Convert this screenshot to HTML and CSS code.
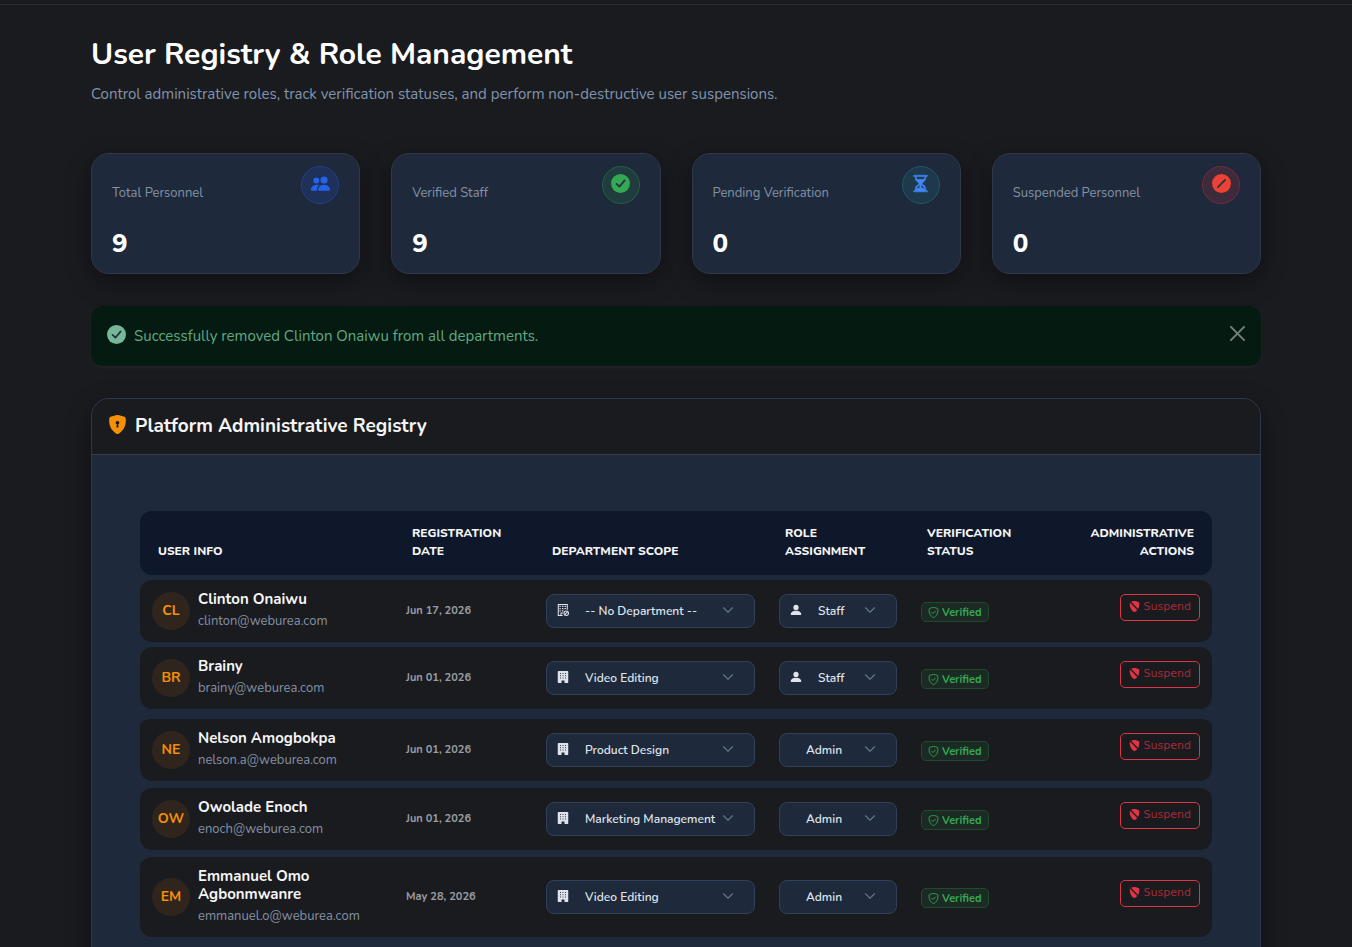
FILE: index.html
```html
<!DOCTYPE html>
<html lang="en">
<head>
  <meta charset="UTF-8">
  <title>User Registry &amp; Role Management</title>
  <meta name="viewport" content="width=device-width,initial-scale=1">
  <link rel="stylesheet" href="styles.css">
</head>
<body>

<!-- ICONS -->
<svg class="sprite" aria-hidden="true">
  <symbol id="people" viewBox="0 0 16 16"><path d="M7 14s-1 0-1-1 1-4 5-4 5 3 5 4-1 1-1 1zm4-6a3 3 0 1 0 0-6 3 3 0 0 0 0 6m-5.784 6A2.24 2.24 0 0 1 5 13c0-1.355.68-2.75 1.936-3.72A6.3 6.3 0 0 0 5 9c-4 0-5 3-5 4s1 1 1 1zM4.500 8a2.500 2.500 0 1 0 0-5 2.500 2.500 0 0 0 0 5"/></symbol>
  <symbol id="check-circle" viewBox="0 0 16 16"><path d="M16 8A8 8 0 1 1 0 8a8 8 0 0 1 16 0"/><path class="cut" d="M4.700 8.300 7.100 10.700 11.500 5.400"/></symbol>
  <symbol id="hourglass" viewBox="0 0 16 16"><path stroke="currentColor" stroke-width=".5" d="M2.500 15a.5.5 0 1 1 0-1h1v-1a4.500 4.500 0 0 1 2.557-4.060c.29-.139.443-.377.443-.59v-.7c0-.213-.154-.451-.443-.59A4.500 4.500 0 0 1 3.500 3V2h-1a.5.5 0 0 1 0-1h11a.5.5 0 0 1 0 1h-1v1a4.500 4.500 0 0 1-2.557 4.060c-.29.139-.443.377-.443.59v.7c0 .213.154.451.443.59A4.500 4.500 0 0 1 12.500 13v1h1a.5.5 0 0 1 0 1zm2-13v1c0 .537.12 1.045.337 1.500h6.326c.216-.455.337-.963.337-1.500V2zm3 6.350c0 .701-.478 1.236-1.011 1.492A3.500 3.500 0 0 0 4.500 13s.866-1.299 3-1.480zm1 0v3.170c2.134.181 3 1.480 3 1.480a3.500 3.500 0 0 0-1.989-3.158C8.978 9.586 8.500 9.052 8.500 8.351z"/></symbol>
  <symbol id="slash-circle" viewBox="0 0 16 16"><circle cx="8" cy="8" r="8"/><path class="cut" d="M5 11 11 5"/></symbol>
  <symbol id="shield-lock" viewBox="0 0 16 16"><path fill-rule="evenodd" d="M8 0c-.69 0-1.843.265-2.928.56-1.110.3-2.229.655-2.887.87a1.540 1.540 0 0 0-1.044 1.262c-.596 4.477.787 7.795 2.465 9.990a11.800 11.800 0 0 0 2.517 2.453c.386.273.744.482 1.048.625.28.132.581.24.829.24s.548-.108.829-.24a7 7 0 0 0 1.048-.625 11.800 11.800 0 0 0 2.517-2.453c1.678-2.195 3.061-5.513 2.465-9.990a1.540 1.540 0 0 0-1.044-1.263 63 63 0 0 0-2.887-.87C9.843.266 8.690 0 8 0m0 5a1.500 1.500 0 0 1 .5 2.915l.385 1.990a.5.5 0 0 1-.491.595h-.788a.5.5 0 0 1-.490-.595l.384-1.990A1.500 1.500 0 0 1 8 5"/></symbol>
  <symbol id="shield-slash" viewBox="0 0 16 16"><path d="M2.200 1.400C4 .800 6.500 0 8 0s4 .800 5.800 1.400c.6.200 1 .700 1.100 1.300.5 3.700-.4 6.700-1.700 8.900L2.900 1.200z"/><path d="M1.200 2.300c-.6 4.600.800 8 2.400 10.300C5 14.500 7 16 8 16c.9 0 2.700-1.200 4.100-2.900z"/></symbol>
  <symbol id="shield-check" viewBox="0 0 16 16"><path d="M8 .7C6.500.7 4 1.500 2.200 2.100c-.3.100-.5.300-.5.600C1 7.500 2.700 10.800 4.300 12.700 5.700 14.300 7.300 15.400 8 15.400s2.300-1.100 3.700-2.700c1.600-1.900 3.300-5.200 2.600-10 0-.3-.2-.5-.5-.6C12 1.500 9.500.7 8 .7z" fill="none" stroke="currentColor" stroke-width="1.300"/><path d="M5.300 7.500 7.300 9.500 10.800 5.800" fill="none" stroke="currentColor" stroke-width="1.300" stroke-linecap="round"/></symbol>
  <symbol id="building" viewBox="0 0 16 16"><path fill-rule="evenodd" d="M2 0a1 1 0 0 0-1 1v14a1 1 0 0 0 1 1h4v-3a.5.5 0 0 1 .5-.5h3a.5.5 0 0 1 .5.5v3h4a1 1 0 0 0 1-1V1a1 1 0 0 0-1-1zm2 2.500h1.200V4H4zm3.400 0h1.200V4H7.400zm3.400 0H12V4h-1.200zM4 5.500h1.200V7H4zm3.400 0h1.200V7H7.400zm3.400 0H12V7h-1.200zM4 8.500h1.200V10H4zm3.400 0h1.200V10H7.400zm3.400 0H12V10h-1.200z"/></symbol>
  <symbol id="building-slash" viewBox="0 0 16 16"><path d="M7.500 15.300H1.700V.7h12v7M5.300 15.300V12H8" fill="none" stroke="currentColor" stroke-width="1.400"/><path d="M3.300 2.300H5V4H3.300zm3.300 0h1.900V4H6.600zm3.400 0h1.900V4H10zM3.300 5.300H5V7H3.300zm3.300 0h1.900V7H6.600zm3.400 0h1.900V7H10zM3.300 8.300H5V10H3.300zm3.300 0h1.900V10H6.600z"/><circle cx="12.300" cy="12.300" r="3" fill="none" stroke="currentColor" stroke-width="1.400"/><path d="m10.300 14.300 4-4" stroke="currentColor" stroke-width="1.400"/></symbol>
  <symbol id="person" viewBox="0 0 16 16"><path d="M2 14.500s-1 0-1-1 1-4.500 7-4.500 7 3.500 7 4.500-1 1-1 1zM8 8a3.500 3.500 0 1 0 0-7 3.500 3.500 0 0 0 0 7"/></symbol>
  <symbol id="chevron" viewBox="0 0 16 16"><path d="m2 5 6 6 6-6" fill="none" stroke="currentColor" stroke-width="1.500" stroke-linecap="round" stroke-linejoin="round"/></symbol>
  <symbol id="close" viewBox="0 0 16 16"><path d="m1 1 14 14M15 1 1 15" fill="none" stroke="currentColor" stroke-width="2" stroke-linecap="round"/></symbol>
</svg>

<div class="topbar"></div>

<main class="container">
  <header class="page-head">
    <h1>User Registry &amp; Role Management</h1>
    <p>Control administrative roles, track verification statuses, and perform non-destructive user suspensions.</p>
  </header>

  <!-- STATS -->
  <section class="stats">
    <div class="stat">
      <span class="stat-label">Total Personnel</span>
      <span class="stat-icon blue"><svg><use href="#people"/></svg></span>
      <strong class="stat-value">9</strong>
    </div>
    <div class="stat">
      <span class="stat-label">Verified Staff</span>
      <span class="stat-icon green"><svg><use href="#check-circle"/></svg></span>
      <strong class="stat-value">9</strong>
    </div>
    <div class="stat">
      <span class="stat-label">Pending Verification</span>
      <span class="stat-icon cyan"><svg><use href="#hourglass"/></svg></span>
      <strong class="stat-value">0</strong>
    </div>
    <div class="stat">
      <span class="stat-label">Suspended Personnel</span>
      <span class="stat-icon red"><svg><use href="#slash-circle"/></svg></span>
      <strong class="stat-value">0</strong>
    </div>
  </section>

  <div class="alert" role="alert">
    <svg class="alert-icon"><use href="#check-circle"/></svg>
    <span>Successfully removed Clinton Onaiwu from all departments.</span>
    <button type="button" class="alert-close" aria-label="Close"><svg><use href="#close"/></svg></button>
  </div>

  <!-- REGISTRY -->
  <section class="panel">
    <div class="panel-head">
      <svg><use href="#shield-lock"/></svg>
      <h2>Platform Administrative Registry</h2>
    </div>
    <div class="panel-body">
      <table class="registry">
        <colgroup>
          <col>
          <col class="col-date">
          <col class="col-dept">
          <col class="col-role">
          <col class="col-status">
          <col class="col-actions">
        </colgroup>
        <thead>
          <tr>
            <th>User Info</th>
            <th>Registration Date</th>
            <th>Department Scope</th>
            <th>Role Assignment</th>
            <th>Verification Status</th>
            <th class="right">Administrative Actions</th>
          </tr>
        </thead>
        <tbody>
          <tr>
            <td><div class="user"><span class="avatar">CL</span><div><div class="name">Clinton Onaiwu</div><div class="email">clinton@weburea.com</div></div></div></td>
            <td class="date">Jun 17, 2026</td>
            <td><div class="picker"><svg><use href="#building-slash"/></svg><select aria-label="Department for Clinton Onaiwu"><option>-- No Department --</option></select><svg class="chevron"><use href="#chevron"/></svg></div></td>
            <td><div class="picker"><svg><use href="#person"/></svg><select aria-label="Role for Clinton Onaiwu"><option>Staff</option></select><svg class="chevron"><use href="#chevron"/></svg></div></td>
            <td><span class="badge"><svg><use href="#shield-check"/></svg>Verified</span></td>
            <td class="actions"><button type="button" class="suspend"><svg><use href="#shield-slash"/></svg>Suspend</button></td>
          </tr>
          <tr>
            <td><div class="user"><span class="avatar">BR</span><div><div class="name">Brainy</div><div class="email">brainy@weburea.com</div></div></div></td>
            <td class="date">Jun 01, 2026</td>
            <td><div class="picker"><svg><use href="#building"/></svg><select aria-label="Department for Brainy"><option>Video Editing</option></select><svg class="chevron"><use href="#chevron"/></svg></div></td>
            <td><div class="picker"><svg><use href="#person"/></svg><select aria-label="Role for Brainy"><option>Staff</option></select><svg class="chevron"><use href="#chevron"/></svg></div></td>
            <td><span class="badge"><svg><use href="#shield-check"/></svg>Verified</span></td>
            <td class="actions"><button type="button" class="suspend"><svg><use href="#shield-slash"/></svg>Suspend</button></td>
          </tr>
          <tr class="group-start">
            <td><div class="user"><span class="avatar">NE</span><div><div class="name">Nelson Amogbokpa</div><div class="email">nelson.a@weburea.com</div></div></div></td>
            <td class="date">Jun 01, 2026</td>
            <td><div class="picker"><svg><use href="#building"/></svg><select aria-label="Department for Nelson Amogbokpa"><option>Product Design</option></select><svg class="chevron"><use href="#chevron"/></svg></div></td>
            <td><div class="picker"><select aria-label="Role for Nelson Amogbokpa"><option>Admin</option></select><svg class="chevron"><use href="#chevron"/></svg></div></td>
            <td><span class="badge"><svg><use href="#shield-check"/></svg>Verified</span></td>
            <td class="actions"><button type="button" class="suspend"><svg><use href="#shield-slash"/></svg>Suspend</button></td>
          </tr>
          <tr class="spaced">
            <td><div class="user"><span class="avatar">OW</span><div><div class="name">Owolade Enoch</div><div class="email">enoch@weburea.com</div></div></div></td>
            <td class="date">Jun 01, 2026</td>
            <td><div class="picker"><svg><use href="#building"/></svg><select aria-label="Department for Owolade Enoch"><option>Marketing Management</option></select><svg class="chevron"><use href="#chevron"/></svg></div></td>
            <td><div class="picker"><select aria-label="Role for Owolade Enoch"><option>Admin</option></select><svg class="chevron"><use href="#chevron"/></svg></div></td>
            <td><span class="badge"><svg><use href="#shield-check"/></svg>Verified</span></td>
            <td class="actions"><button type="button" class="suspend"><svg><use href="#shield-slash"/></svg>Suspend</button></td>
          </tr>
          <tr class="spaced">
            <td><div class="user"><span class="avatar">EM</span><div><div class="name">Emmanuel Omo Agbonmwanre</div><div class="email">emmanuel.o@weburea.com</div></div></div></td>
            <td class="date">May 28, 2026</td>
            <td><div class="picker"><svg><use href="#building"/></svg><select aria-label="Department for Emmanuel Omo Agbonmwanre"><option>Video Editing</option></select><svg class="chevron"><use href="#chevron"/></svg></div></td>
            <td><div class="picker"><select aria-label="Role for Emmanuel Omo Agbonmwanre"><option>Admin</option></select><svg class="chevron"><use href="#chevron"/></svg></div></td>
            <td><span class="badge"><svg><use href="#shield-check"/></svg>Verified</span></td>
            <td class="actions"><button type="button" class="suspend"><svg><use href="#shield-slash"/></svg>Suspend</button></td>
          </tr>
        </tbody>
      </table>
    </div>
  </section>
</main>

</body>
</html>
```
FILE: styles.css
```css
* { box-sizing: border-box; }
body { margin: 0; background: #1a1b1f; color: #f5f5f6; font-family: Nunito, Lato, sans-serif; font-size: 15px; }
h1, h2, p { margin: 0; }
svg { display: block; flex: none; fill: currentColor; }
button, select { font-family: inherit; }
.sprite { position: absolute; width: 0; height: 0; }
.topbar { height: 5px; border-bottom: 1px solid #2c2d32; }
.container { max-width: 1170px; margin: 0 auto; padding-bottom: 48px; }

.page-head { padding: 30px 0 48px; }
.page-head h1 { font-size: 30px; line-height: 40px; font-weight: 700; color: #fff; }
.page-head p { margin-top: 8px; font-size: 15px; line-height: 22px; color: #8094ae; }

/* stats */
.stats { display: grid; grid-template-columns: repeat(4, 1fr); gap: 31px; }
.stat {
  display: grid;
  grid-template-columns: 1fr auto;
  align-items: start;
  align-content: start;
  height: 121px;
  padding: 12px 20px;
  background: #1e293b;
  border: 1px solid #30394a;
  border-radius: 18px;
  box-shadow: 0 8px 24px rgba(0, 0, 0, 0.4);
}
.stat-label { margin-top: 17px; font-size: 13px; line-height: 20px; color: #8492a6; }
.stat-value { margin-top: 24px; font-size: 26px; line-height: 32px; font-weight: 800; color: #fff; }
.stat-icon { display: grid; place-items: center; width: 38px; height: 38px; border: 1px solid; border-radius: 50%; }
.stat-icon svg { width: 19px; height: 19px; margin-bottom: 3px; }
.stat-icon.blue { background: #1f3158; border-color: #21418a; color: #2563eb; }
.stat-icon.green { background: #213c3e; border-color: #22633f; color: #34a853; }
.stat-icon.cyan { background: #1e394c; border-color: #1c5868; color: #4285f4; }
.stat-icon.red { background: #3d2a3b; border-color: #78293b; color: #ea4335; }
.cut { fill: none; stroke: #243342; stroke-width: 1.5px; stroke-linecap: round; stroke-linejoin: round; }

/* alert */
.alert {
  display: flex;
  align-items: center;
  gap: 8px;
  height: 60px;
  margin-top: 32px;
  padding: 0 16px;
  background: #051b11;
  border-radius: 12px;
  box-shadow: 0 2px 4px rgba(255, 255, 255, 0.04);
  color: #62a884;
}
.alert-icon { width: 19px; height: 19px; margin-bottom: 3px; color: #75b798; }
.alert-close { margin: 0 0 5px auto; padding: 0; border: 0; background: none; color: #78827d; }
.alert-close svg { width: 15px; height: 15px; }

/* registry */
.panel {
  margin-top: 32px;
  background: #1e293b;
  border: 1px solid #2c394c;
  border-radius: 18px;
  overflow: hidden;
  box-shadow: 0 8px 24px rgba(0, 0, 0, 0.4);
}
.panel-head { display: flex; align-items: center; gap: 8px; height: 56px; padding: 0 16px 2px; background: #1a1b1f; border-bottom: 1px solid #3a3d44; }
.panel-head svg { width: 19px; height: 19px; margin-bottom: 3px; color: #f58f08; }
.panel-head h2 { font-size: 19px; line-height: 24px; }
.panel-body { padding: 51px 48px 48px; }
.registry { width: 100%; table-layout: fixed; border-spacing: 0 5px; }
.col-date { width: 140px; }
.col-dept { width: 233px; }
.col-role { width: 142px; }
.col-status { width: 141px; }
.col-actions { width: 162px; }
th {
  padding: 13px 18px 15px;
  background: #0f172a;
  font-size: 12px;
  line-height: 18px;
  font-weight: 800;
  text-align: left;
  text-transform: uppercase;
  vertical-align: bottom;
}
td { height: 62px; padding: 12px; background: #1a1b1f; background-clip: padding-box; vertical-align: middle; }
th:first-child, td:first-child { border-radius: 12px 0 0 12px; }
th:last-child, td:last-child { border-radius: 0 12px 12px 0; }
.right, .actions { text-align: right; }
.group-start td { height: 67px; border-top: 5px solid transparent; }
.spaced td { height: 64px; border-top: 2px solid transparent; }

.user { display: flex; align-items: center; gap: 8px; }
.avatar { flex: none; width: 38px; height: 38px; border-radius: 50%; background: #30251d; color: #f58f08; font-size: 14px; font-weight: 700; line-height: 38px; text-align: center; }
.name { margin-top: -2px; font-size: 15px; line-height: 18px; font-weight: 700; }
.email { margin-top: 4px; font-size: 13px; line-height: 18px; color: #8492a6; }
.date { font-size: 11px; font-weight: 700; color: #9a9da3; }
td.date { padding-bottom: 14px; }

.picker { position: relative; display: flex; align-items: center; height: 34px; padding-left: 10px; background: #1e293b; border: 1px solid #31415a; border-radius: 8px; color: #dfe4ec; }
.picker svg { width: 12px; height: 12px; margin-bottom: 2px; }
.picker select {
  flex: 1;
  min-width: 0;
  height: 32px;
  padding: 0 0 0 16px;
  border: 0;
  background: none;
  appearance: none;
  color: inherit;
  font-size: 12px;
  font-weight: 600;
}
.picker .chevron { position: absolute; right: 20px; top: 9px; color: #64748b; pointer-events: none; }

.badge { display: inline-flex; align-items: center; gap: 3px; height: 20px; padding: 0 6px; margin-top: 2px; background: #1c2a24; border: 1px solid #1f4a2d; border-radius: 5px; color: #34a853; font-size: 11px; font-weight: 700; vertical-align: middle; }
.badge svg { width: 11px; height: 11px; }
.suspend { display: inline-flex; align-items: center; gap: 4px; height: 27px; padding: 0 8px 2px; margin-bottom: 7px; background: none; border: 1px solid #dc3545; border-radius: 5px; color: #a52a38; font-family: "DejaVu Sans", sans-serif; font-size: 11px; vertical-align: middle; }
.suspend svg { width: 11px; height: 11px; color: #dc3545; }
```
